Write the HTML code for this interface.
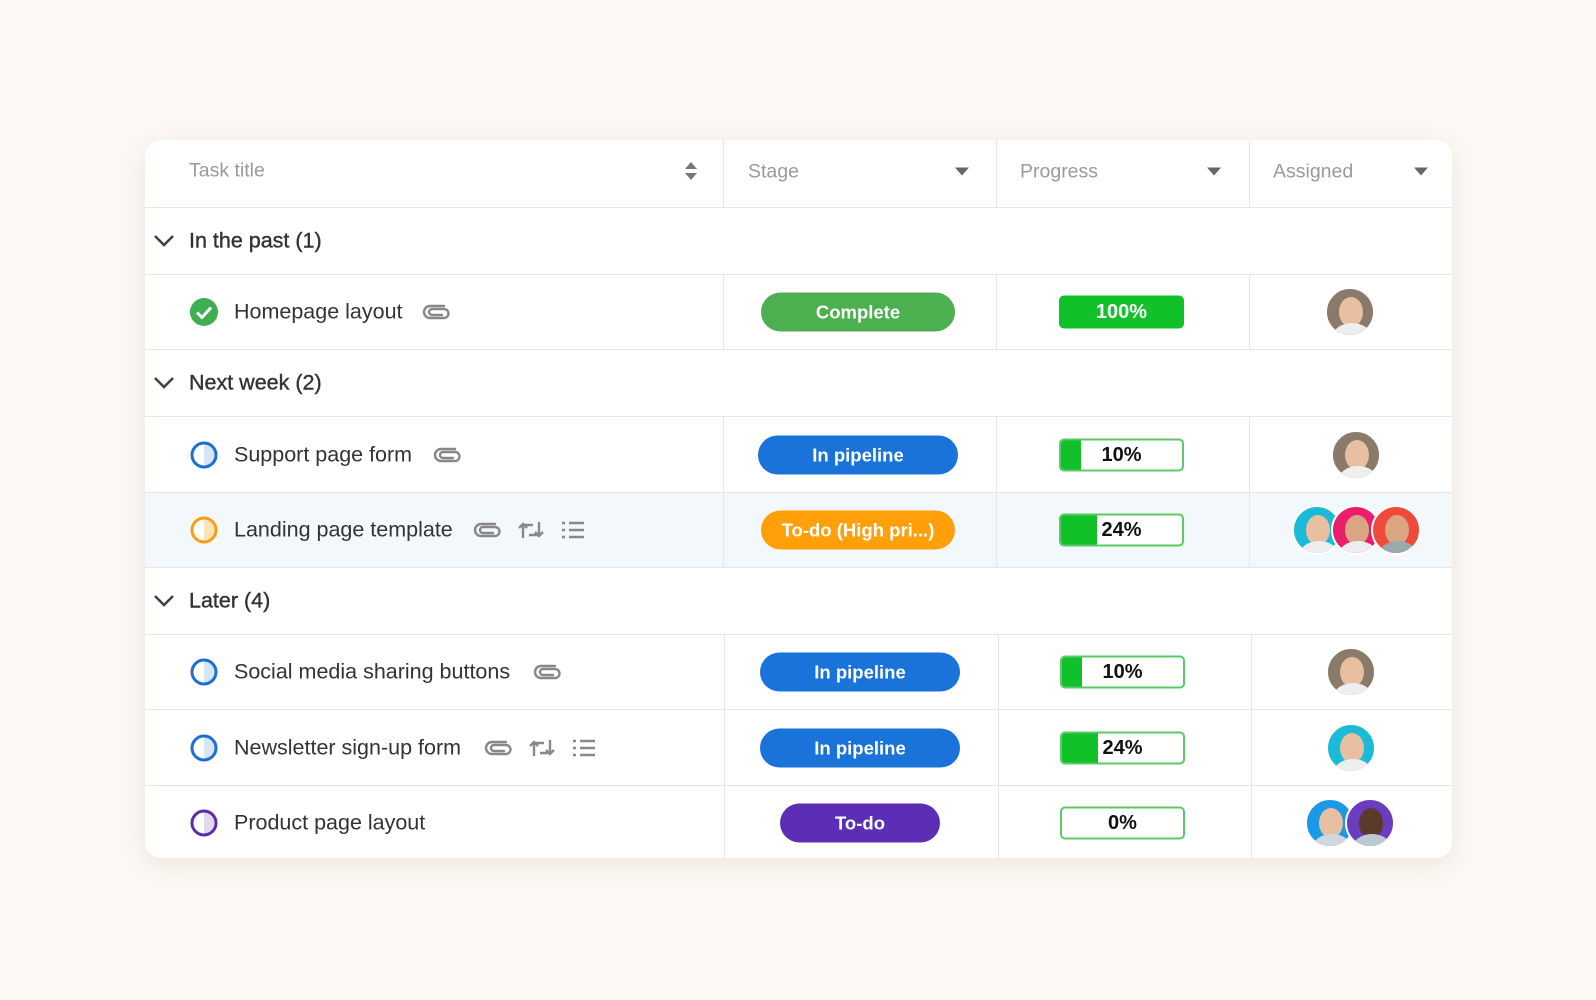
<!DOCTYPE html>
<html><head><meta charset="utf-8"><style>
*{margin:0;padding:0;box-sizing:border-box}
body{width:1596px;height:1000px;background:#fcf8f3;font-family:"Liberation Sans",Arial,sans-serif;position:relative;overflow:hidden}
.card{position:absolute;left:145px;top:140px;width:1307px;height:718px;background:#fff;border-radius:16px;box-shadow:0 6px 24px rgba(120,100,70,.12);overflow:hidden}
.hl{position:absolute;left:0;right:0;height:1px;background:#e6e6e6}
.vl{position:absolute;width:1px;background:#e6e6e6}
.t{position:absolute;white-space:nowrap;transform:translateY(-50%)}
.hd{color:#9a9a9a;font-size:19.5px}
.grp{font-size:21.5px;color:#333;-webkit-text-stroke:0.4px #333}
.nm{font-size:21.5px;color:#333}
.pill{position:absolute;height:39px;border-radius:20px;color:#fff;font-weight:bold;font-size:18.5px;display:flex;align-items:center;justify-content:center;transform:translateY(-50%)}
.bar{position:absolute;left:914px;width:125px;height:33px;border:2px solid #5cc866;border-radius:5px;transform:translateY(-50%);overflow:hidden;background:#fff}
.bar .f{position:absolute;left:0;top:0;bottom:0;background:#11c12a}
.bar span{position:absolute;left:0;right:0;top:50%;transform:translateY(-50%);text-align:center;font-weight:bold;font-size:20px;color:#111}
.av{position:absolute;width:50px;height:50px;border-radius:50%;transform:translate(-50%,-50%);border:2px solid #fff;overflow:hidden}
.av i{position:absolute;left:12px;top:8px;width:24px;height:30px;border-radius:50%;background:#e8bfa0}
.av b{position:absolute;left:5px;top:34px;width:40px;height:30px;border-radius:50%;background:#eee}
.circ{position:absolute;width:27px;height:27px;border-radius:50%;transform:translate(-50%,-50%);border:3px solid}
svg.ic{position:absolute;transform:translate(-50%,-50%)}
</style></head><body>
<div class="card">
<div class="hl" style="top:67px"></div><div class="hl" style="top:134px"></div><div class="hl" style="top:209px"></div><div class="hl" style="top:276px"></div><div class="hl" style="top:352px"></div><div class="hl" style="top:427px"></div><div class="hl" style="top:494px"></div><div class="hl" style="top:569px"></div><div class="hl" style="top:645px"></div>
<div style="position:absolute;left:0;right:0;top:353px;height:74px;background:#f3f8fc"></div>
<div class="vl" style="left:578px;top:0;height:67px"></div><div class="vl" style="left:851px;top:0;height:67px"></div><div class="vl" style="left:1104px;top:0;height:67px"></div>
<div class="vl" style="left:578px;top:134px;height:75px"></div><div class="vl" style="left:851px;top:134px;height:75px"></div><div class="vl" style="left:1104px;top:134px;height:75px"></div>
<div class="vl" style="left:578px;top:276px;height:151px"></div><div class="vl" style="left:851px;top:276px;height:151px"></div><div class="vl" style="left:1104px;top:276px;height:151px"></div>
<div class="vl" style="left:579px;top:494px;height:224px"></div><div class="vl" style="left:853px;top:494px;height:224px"></div><div class="vl" style="left:1106px;top:494px;height:224px"></div>

<div class="t hd" style="left:44px;top:31px">Task title</div>
<svg class="ic" style="left:546px;top:31px" width="14" height="20" viewBox="0 0 14 20"><path d="M7 1L13 8H1Z M7 19L13 12H1Z" fill="#777"/></svg>
<div class="t hd" style="left:603px;top:32px">Stage</div>
<svg class="ic" style="left:817px;top:32px" width="14" height="9" viewBox="0 0 14 9"><path d="M0 0H14L7 8Z" fill="#666"/></svg>
<div class="t hd" style="left:875px;top:32px">Progress</div>
<svg class="ic" style="left:1069px;top:32px" width="14" height="9" viewBox="0 0 14 9"><path d="M0 0H14L7 8Z" fill="#666"/></svg>
<div class="t hd" style="left:1128px;top:32px">Assigned</div>
<svg class="ic" style="left:1276px;top:32px" width="14" height="9" viewBox="0 0 14 9"><path d="M0 0H14L7 8Z" fill="#666"/></svg>

<svg class="ic" style="left:19px;top:101px" width="22" height="14" viewBox="0 0 22 14"><path d="M2 2L11 11L20 2" stroke="#444" stroke-width="2.6" fill="none"/></svg>
<div class="t grp" style="left:44px;top:101px">In the past (1)</div>
<svg class="ic" style="left:19px;top:243px" width="22" height="14" viewBox="0 0 22 14"><path d="M2 2L11 11L20 2" stroke="#444" stroke-width="2.6" fill="none"/></svg>
<div class="t grp" style="left:44px;top:243px">Next week (2)</div>
<svg class="ic" style="left:19px;top:461px" width="22" height="14" viewBox="0 0 22 14"><path d="M2 2L11 11L20 2" stroke="#444" stroke-width="2.6" fill="none"/></svg>
<div class="t grp" style="left:44px;top:461px">Later (4)</div>

<!-- row1 -->
<svg class="ic" style="left:59px;top:172px" width="28" height="28" viewBox="0 0 28 28"><circle cx="14" cy="14" r="14" fill="#3fae4f"/><path d="M7 14.5L12 19.5L21 9.5" stroke="#fff" stroke-width="3" fill="none"/></svg>
<div class="t nm" style="left:89px;top:172px">Homepage layout</div>
<svg class="ic" style="left:291px;top:172px" width="28" height="20" viewBox="0 0 28 20"><path d="M20 13H10a3 3 0 0 1 0-6h12a4.5 4.5 0 0 1 0 9H8a6 6 0 0 1 0-12h14" stroke="#888" stroke-width="2.4" fill="none" stroke-linecap="round"/></svg>
<div class="pill" style="left:616px;width:194px;top:172px;background:#4caf50">Complete</div>
<div class="bar" style="top:172px;background:#11c12a;border-color:#11c12a"><span style="color:#fff">100%</span></div>
<div class="av" style="left:1205px;top:172px;background:#8a7a6a"><i></i><b></b></div>

<!-- row2 -->
<div class="circ" style="left:59px;top:315px;border-color:#1b6fd0;background:linear-gradient(90deg,#fff 50%,#d7e6f7 50%)"></div>
<div class="t nm" style="left:89px;top:315px">Support page form</div>
<svg class="ic" style="left:302px;top:315px" width="28" height="20" viewBox="0 0 28 20"><path d="M20 13H10a3 3 0 0 1 0-6h12a4.5 4.5 0 0 1 0 9H8a6 6 0 0 1 0-12h14" stroke="#888" stroke-width="2.4" fill="none" stroke-linecap="round"/></svg>
<div class="pill" style="left:613px;width:200px;top:315px;background:#1a73d8">In pipeline</div>
<div class="bar" style="top:315px"><div class="f" style="width:20px"></div><span>10%</span></div>
<div class="av" style="left:1211px;top:315px;background:#8a7a6a"><i></i><b></b></div>

<!-- row3 -->
<div class="circ" style="left:59px;top:390px;border-color:#f5a00d;background:linear-gradient(90deg,#fff 50%,#fbe3c0 50%)"></div>
<div class="t nm" style="left:89px;top:390px">Landing page template</div>
<svg class="ic" style="left:342px;top:390px" width="28" height="20" viewBox="0 0 28 20"><path d="M20 13H10a3 3 0 0 1 0-6h12a4.5 4.5 0 0 1 0 9H8a6 6 0 0 1 0-12h14" stroke="#888" stroke-width="2.4" fill="none" stroke-linecap="round"/></svg>
<svg class="ic" style="left:386px;top:390px" width="28" height="22" viewBox="0 0 28 22"><path d="M6 19V6h10M2 9l4-4 4 4M22 3v13H12M18 13l4 4 4-4" stroke="#888" stroke-width="2.4" fill="none"/></svg>
<svg class="ic" style="left:428px;top:390px" width="26" height="20" viewBox="0 0 26 20"><path d="M2 3h3M2 10h3M2 17h3M9 3h15M9 10h15M9 17h15" stroke="#888" stroke-width="2.6"/></svg>
<div class="pill" style="left:616px;width:194px;top:390px;background:#ff9f0a">To-do (High pri...)</div>
<div class="bar" style="top:390px"><div class="f" style="width:36px"></div><span>24%</span></div>
<div class="av" style="left:1172px;top:390px;background:#1bbad6"><i></i><b></b></div>
<div class="av" style="left:1211px;top:390px;background:#ea1f6c"><i style="background:#d9a582"></i><b></b></div>
<div class="av" style="left:1251px;top:390px;background:#f04a3a"><i style="background:#d9a582"></i><b style="background:#9aa"></b></div>

<!-- row4 -->
<div class="circ" style="left:59px;top:532px;border-color:#1b6fd0;background:linear-gradient(90deg,#fff 50%,#d7e6f7 50%)"></div>
<div class="t nm" style="left:89px;top:532px">Social media sharing buttons</div>
<svg class="ic" style="left:402px;top:532px" width="28" height="20" viewBox="0 0 28 20"><path d="M20 13H10a3 3 0 0 1 0-6h12a4.5 4.5 0 0 1 0 9H8a6 6 0 0 1 0-12h14" stroke="#888" stroke-width="2.4" fill="none" stroke-linecap="round"/></svg>
<div class="pill" style="left:615px;width:200px;top:532px;background:#1a73d8">In pipeline</div>
<div class="bar" style="left:915px;top:532px"><div class="f" style="width:20px"></div><span>10%</span></div>
<div class="av" style="left:1206px;top:532px;background:#8a7a6a"><i></i><b></b></div>

<!-- row5 -->
<div class="circ" style="left:59px;top:608px;border-color:#1b6fd0;background:linear-gradient(90deg,#fff 50%,#d7e6f7 50%)"></div>
<div class="t nm" style="left:89px;top:608px">Newsletter sign-up form</div>
<svg class="ic" style="left:353px;top:608px" width="28" height="20" viewBox="0 0 28 20"><path d="M20 13H10a3 3 0 0 1 0-6h12a4.5 4.5 0 0 1 0 9H8a6 6 0 0 1 0-12h14" stroke="#888" stroke-width="2.4" fill="none" stroke-linecap="round"/></svg>
<svg class="ic" style="left:397px;top:608px" width="28" height="22" viewBox="0 0 28 22"><path d="M6 19V6h10M2 9l4-4 4 4M22 3v13H12M18 13l4 4 4-4" stroke="#888" stroke-width="2.4" fill="none"/></svg>
<svg class="ic" style="left:439px;top:608px" width="26" height="20" viewBox="0 0 26 20"><path d="M2 3h3M2 10h3M2 17h3M9 3h15M9 10h15M9 17h15" stroke="#888" stroke-width="2.6"/></svg>
<div class="pill" style="left:615px;width:200px;top:608px;background:#1a73d8">In pipeline</div>
<div class="bar" style="left:915px;top:608px"><div class="f" style="width:36px"></div><span>24%</span></div>
<div class="av" style="left:1206px;top:608px;background:#1bbad6"><i></i><b></b></div>

<!-- row6 -->
<div class="circ" style="left:59px;top:683px;border-color:#5a2db0;background:linear-gradient(90deg,#fff 50%,#e2d8f2 50%)"></div>
<div class="t nm" style="left:89px;top:683px">Product page layout</div>
<div class="pill" style="left:635px;width:160px;top:683px;background:#5b2eb5">To-do</div>
<div class="bar" style="left:915px;top:683px"><span>0%</span></div>
<div class="av" style="left:1185px;top:683px;background:#1a9ae6"><i></i><b style="background:#cfd8e0"></b></div>
<div class="av" style="left:1225px;top:683px;background:#6b3cc0"><i style="background:#5a3a28"></i><b style="background:#bcc8d4"></b></div>
</div>
</body></html>
